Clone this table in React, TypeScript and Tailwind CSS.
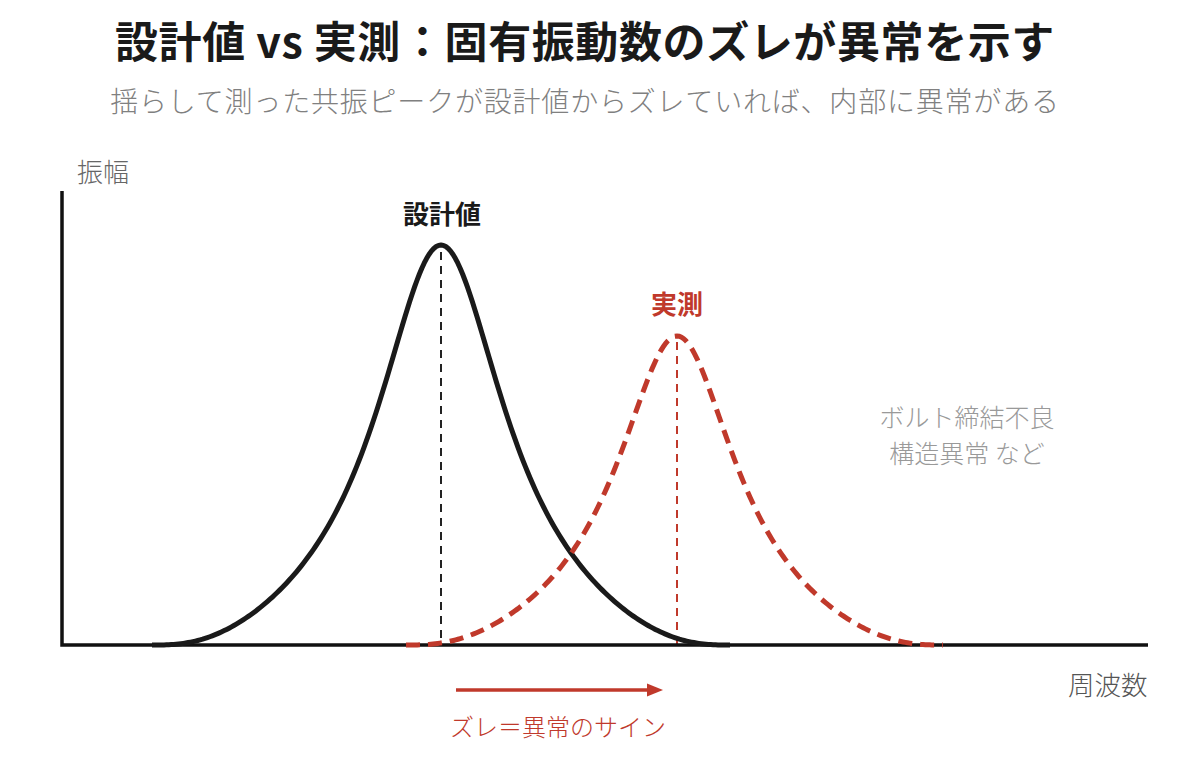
import React from "react";

const FONT = { fontFamily: '"Noto Sans CJK JP", "Noto Sans", sans-serif' };

function peakPath(cx: number, peakY: number, baseY: number, wl: number, wr: number) {
  const H = baseY - peakY;
  const f = (u: number) => {
    const l = 1 / (1 + 14 * u * u);
    const w = Math.pow(1 - u * u * u * u, 3);
    return l * w;
  };
  const pts: string[] = [];
  const n = 120;
  for (let i = 0; i <= n; i++) {
    const u = 1 - i / n;
    const x = cx - u * wl;
    const y = baseY - H * f(u);
    pts.push(`${x.toFixed(2)},${y.toFixed(2)}`);
  }
  for (let i = 1; i <= n; i++) {
    const u = i / n;
    const x = cx + u * wr;
    const y = baseY - H * f(u);
    pts.push(`${x.toFixed(2)},${y.toFixed(2)}`);
  }
  return "M" + pts.join(" L");
}

export default function App() {
  const black = peakPath(441, 245, 645, 289, 289);
  const red = peakPath(677, 336, 645, 271, 266);
  return (
    <div className="w-[1200px] h-[759px] bg-white overflow-hidden flex flex-col" style={FONT}>
      <header className="h-[130px] pr-[30px] flex flex-col items-center">
        <h1 className="pt-[14px] text-[43px] leading-[1.2] font-bold tracking-[0.6px] text-[#1a1a1a]">
          設計値 vs 実測：固有振動数のズレが異常を示す
        </h1>
        <p className="mt-[18px] text-[28px] leading-[1.2] font-light tracking-[0.8px] text-[#808080]">
          揺らして測った共振ピークが設計値からズレていれば、内部に異常がある
        </p>
      </header>
      <div className="relative flex-1">
        <svg className="absolute inset-0" width="1200" height="629" viewBox="0 0 1200 629">
          <g transform="translate(0,-130)">
            <line x1="441" y1="252" x2="441" y2="645" stroke="#222" strokeWidth="2" strokeDasharray="8 6" />
            <line x1="677" y1="342" x2="677" y2="645" stroke="#c0392b" strokeWidth="2" strokeDasharray="8 6" />
            <path d="M62 191 L62 645 L1148 645" fill="none" stroke="#111" strokeWidth="3.5" />
            <path d={black} fill="none" stroke="#1a1a1a" strokeWidth="5" strokeLinejoin="round" />
            <path d={red} fill="none" stroke="#c0392b" strokeWidth="5" strokeDasharray="14 8" />
            <line x1="456" y1="690" x2="648" y2="690" stroke="#c0392b" strokeWidth="3.5" />
            <polygon points="647,683.5 663,690 647,696.5" fill="#c0392b" />
          </g>
        </svg>
        <div className="absolute left-[77px] top-[28px] text-[26px] leading-none font-light text-[#666]">振幅</div>
        <div className="absolute left-[442px] top-[70px] -translate-x-1/2 text-[26px] leading-none font-bold text-[#1a1a1a] whitespace-nowrap">設計値</div>
        <div className="absolute left-[677px] top-[160px] -translate-x-1/2 text-[26px] leading-none font-bold text-[#c0392b] whitespace-nowrap">実測</div>
        <div className="absolute left-[967px] top-[268px] -translate-x-1/2 text-[25px] leading-[36px] font-light text-[#999] text-center whitespace-nowrap">
          <div>ボルト締結不良</div>
          <div>構造異常 など</div>
        </div>
        <div className="absolute left-[1068px] top-[541px] text-[26.5px] leading-none font-light text-[#555] whitespace-nowrap">周波数</div>
        <div className="absolute left-[558px] top-[584px] -translate-x-1/2 text-[24px] leading-none font-light text-[#c0392b] whitespace-nowrap">ズレ＝異常のサイン</div>
      </div>
    </div>
  );
}
